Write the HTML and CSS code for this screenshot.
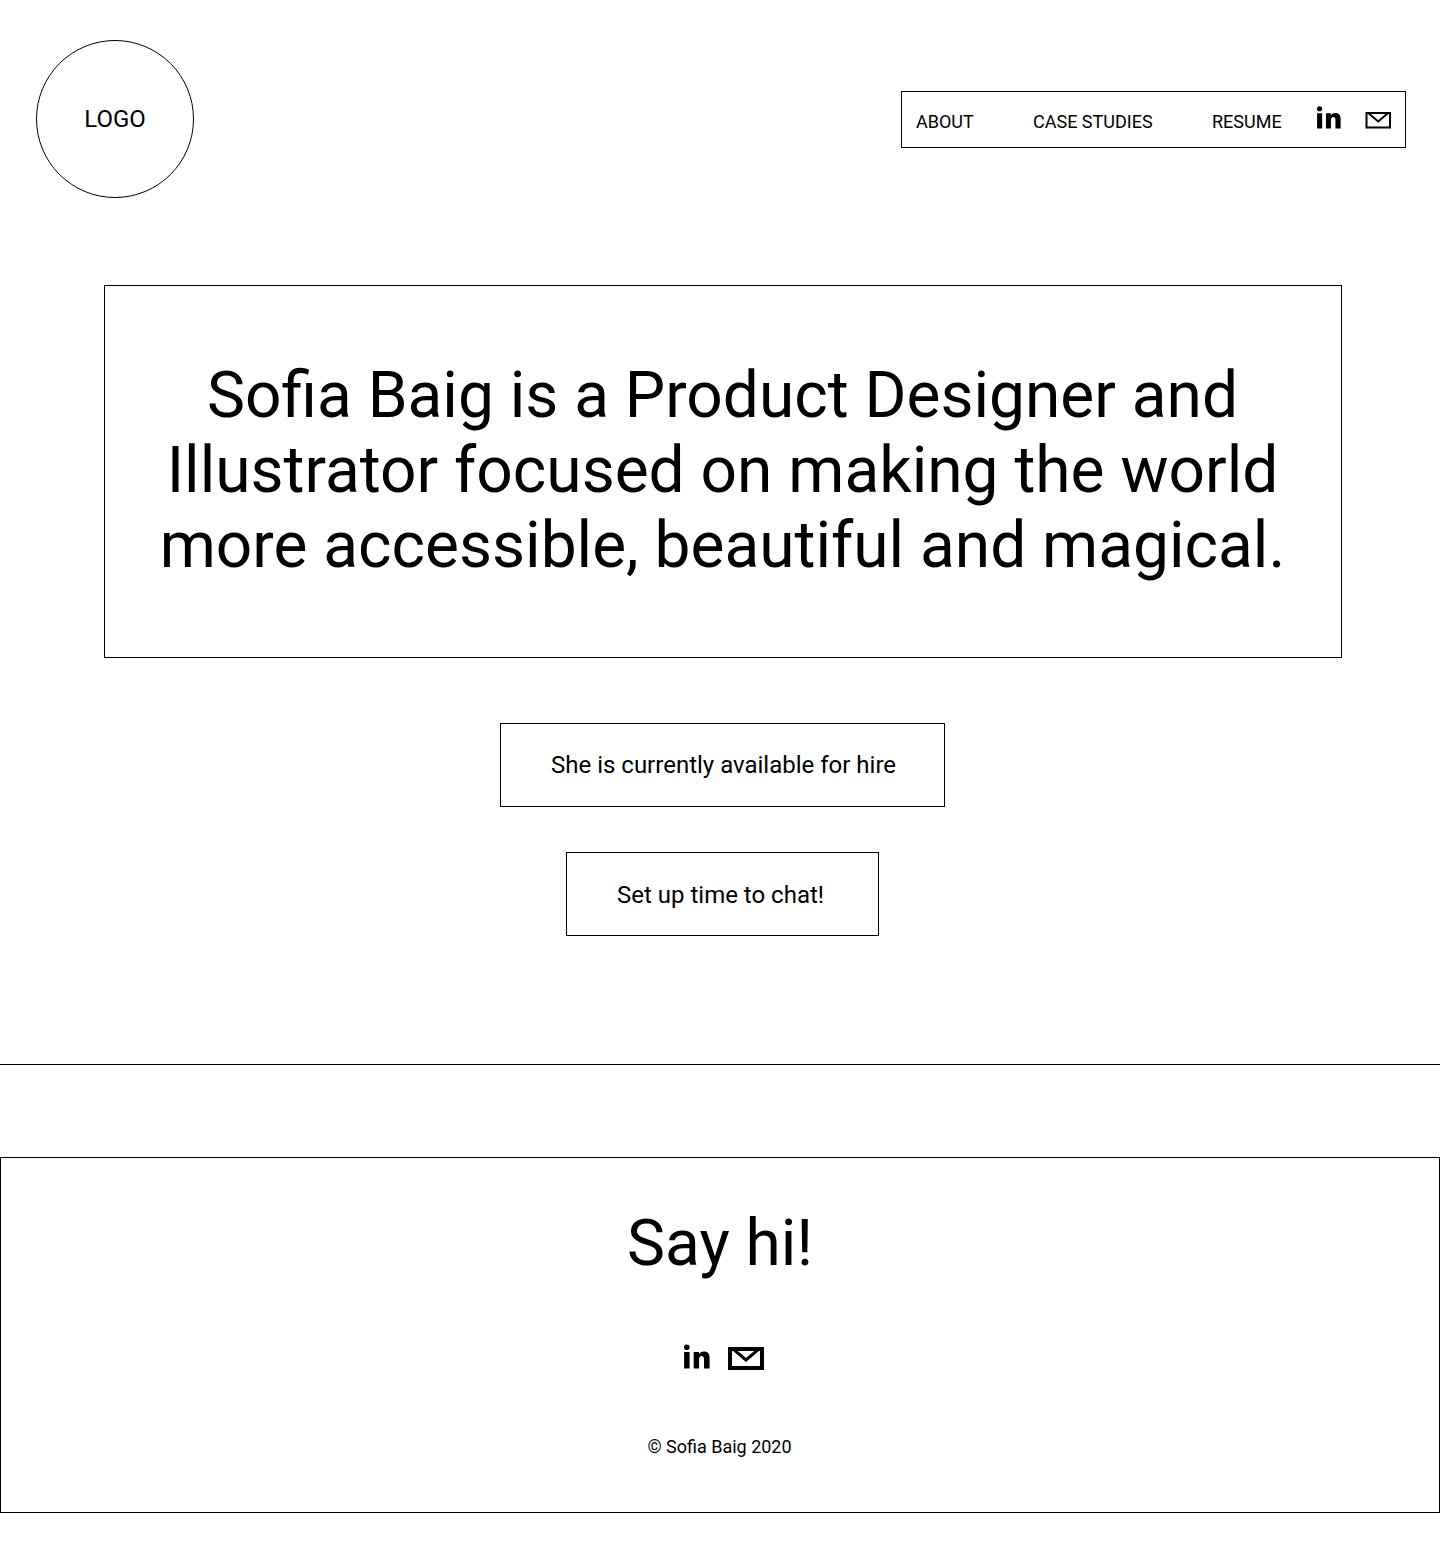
FILE: index.html
```html
<!DOCTYPE html>
<html lang="en">
<head>
<meta charset="utf-8">
<title>Sofia Baig</title>
<link rel="stylesheet" href="styles.css">
</head>
<body>
<header class="header">
  <div class="logo">LOGO</div>
  <nav class="nav">
    <a class="nav-about">ABOUT</a>
    <a class="nav-cases">CASE STUDIES</a>
    <a class="nav-resume">RESUME</a>
    <svg class="nav-linkedin" viewBox="0 0 26 25" preserveAspectRatio="none"><circle cx="2.8" cy="3" r="2.8"/><path d="M.1 8h5.5v16.5H.1zM9.7 8H15v2.3c.8-1.4 2.6-2.7 5-2.7 4.2 0 5.6 2.6 5.6 6.9v10H20v-9c0-2-.5-3.6-2.4-3.6s-2.5 1.5-2.5 3.5v9.1H9.7z"/></svg>
    <svg class="nav-mail" viewBox="0 0 26 17"><path d="M1.5 1H25v14.4H1.5zM3 .8 13.2 9.4 23.4.8"/></svg>
  </nav>
</header>
<main class="main">
  <h1 class="hero">Sofia Baig is a Product Designer and<br>Illustrator focused on making the world<br>more accessible, beautiful and magical.</h1>
  <a class="box box-hire">She is currently available for hire</a>
  <a class="box box-chat">Set up time to chat!</a>
</main>
<hr class="rule">
<footer class="footer">
  <h2 class="footer-title">Say hi!</h2>
  <div class="social">
    <svg class="social-linkedin" viewBox="0 0 26 25"><circle cx="2.8" cy="3.3" r="2.8"/><path d="M.1 8h5.5v16.5H.1zM9.7 8H15v2.3c.8-1.4 2.6-2.7 5-2.7 4.2 0 5.6 2.6 5.6 6.9v10H20v-9c0-2-.5-3.6-2.4-3.6s-2.5 1.5-2.5 3.5v9.1H9.7z"/></svg>
    <svg class="social-mail" viewBox="0 0 36 23"><path class="frame" d="M2 2h32v19H2z"/><path class="flap" d="M4.6 1.6 18 13 31.4 1.6"/></svg>
  </div>
  <p class="copyright">© Sofia Baig 2020</p>
</footer>
</body>
</html>
```
FILE: styles.css
```css
* { box-sizing: border-box; }
body {
  margin: 0;
  min-height: 1564px;
  background: #fff;
  color: #000;
  font-family: Roboto, sans-serif;
}
h1, h2, p { margin: 0; font-weight: 400; }
svg { display: block; flex: none; }

.header {
  display: flex;
  justify-content: space-between;
  align-items: flex-start;
  padding: 40px 34px 0 36px;
}
.logo {
  display: flex;
  align-items: center;
  justify-content: center;
  width: 158px;
  height: 158px;
  border: 1px solid #000;
  border-radius: 50%;
  font-size: 24px;
  line-height: 28px;
}
.nav {
  display: flex;
  align-items: flex-start;
  width: 505px;
  height: 57px;
  margin-top: 51px;
  padding: 0 0 0 14px;
  border: 1px solid #000;
  font-size: 18px;
  line-height: 21px;
  white-space: nowrap;
}
.nav a { padding-top: 19px; }
.nav-about { width: 117px; }
.nav-cases { width: 179px; }
.nav-resume { width: 105px; }
.nav-linkedin { width: 24px; height: 23px; margin-top: 14px; }
.nav-mail {
  width: 26px;
  height: 17px;
  margin: 20px 0 0 24px;
  fill: none;
  stroke: #000;
  stroke-width: 2;
}

.main {
  display: flex;
  flex-direction: column;
  align-items: center;
  padding: 87px 0 128px 5px;
}
.hero {
  width: 1238px;
  height: 373px;
  padding-top: 72px;
  border: 1px solid #000;
  font-size: 64px;
  line-height: 75px;
  text-align: center;
}
.box {
  height: 84px;
  border: 1px solid #000;
  font-size: 24px;
  line-height: 28px;
  white-space: nowrap;
}
.box-hire { width: 445px; margin-top: 65px; padding: 27px 0 0 50px; }
.box-chat { width: 313px; margin-top: 45px; padding: 28px 0 0 50px; }

.rule { height: 1px; margin: 0; border: 0; background: #000; }
.footer {
  display: flex;
  flex-direction: column;
  align-items: center;
  height: 356px;
  margin-top: 92px;
  padding-top: 48px;
  border: 1px solid #000;
}
.footer-title { font-size: 64px; line-height: 75px; }
.social {
  display: flex;
  gap: 18px;
  margin: 63px 0 0 8px;
}
.social-linkedin { width: 26px; height: 25px; }
.social-mail { width: 36px; height: 23px; margin-top: 3px; }
.frame, .flap { fill: none; stroke: #000; }
.frame { stroke-width: 4; }
.flap { stroke-width: 3; }
.copyright {
  margin: 66px 1px 0 0;
  font-size: 18px;
  line-height: 21px;
}
```
